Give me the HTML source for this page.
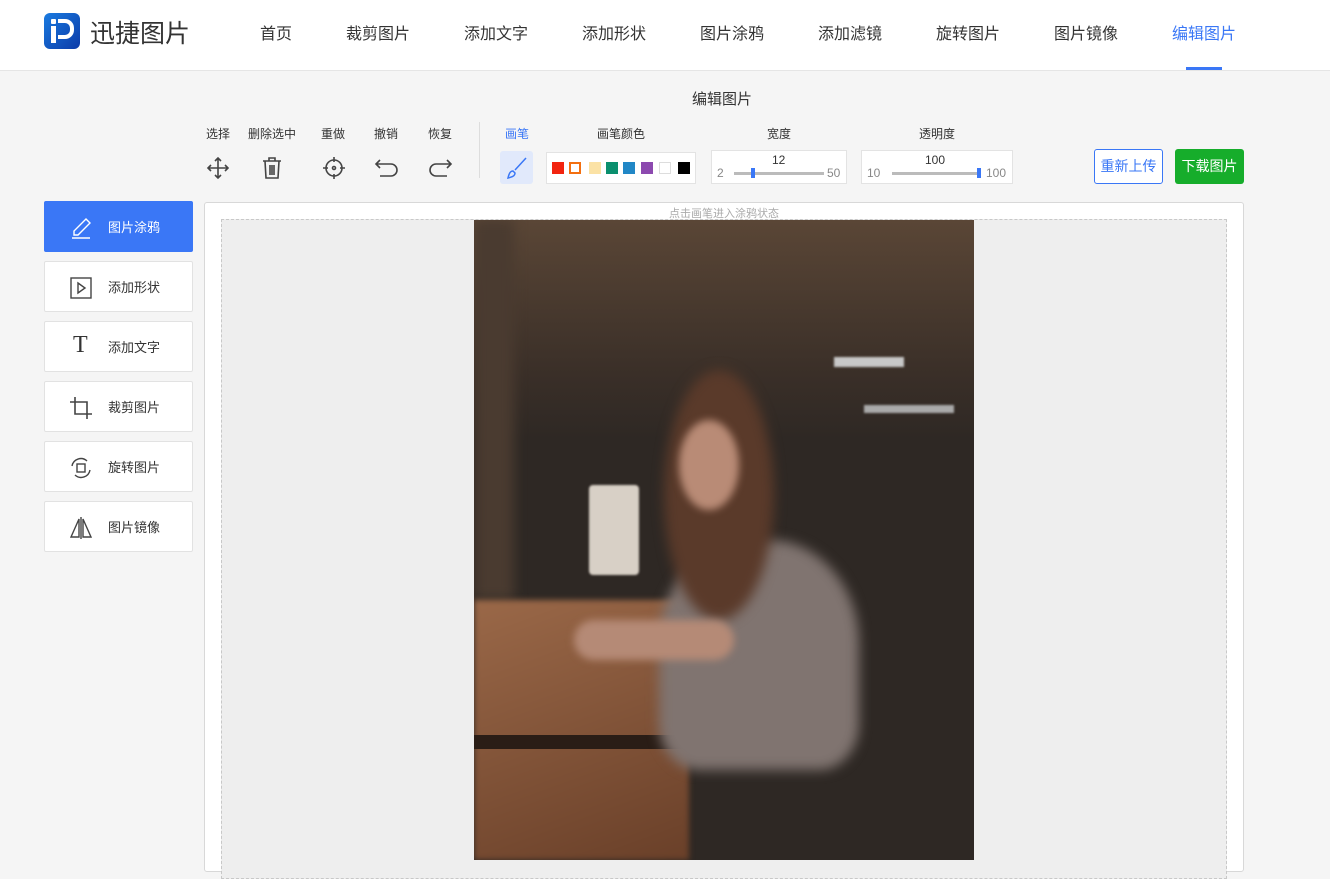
<!DOCTYPE html><html><head><meta charset="utf-8"><style>
*{box-sizing:border-box;margin:0;padding:0}
body{width:1330px;height:860px;overflow:hidden;background:#f5f5f5;font-family:"Liberation Sans","Noto Sans CJK SC",sans-serif;position:relative;color:#333}
.hdr{position:absolute;left:0;top:0;width:1330px;height:71px;background:#fff;border-bottom:1px solid #e5e5e5}
.logo{position:absolute;left:44px;top:13px;width:36px;height:36px;border-radius:6px;background:linear-gradient(135deg,#1a7be0,#0b3aa8)}
.brand{position:absolute;left:90px;top:14px;font-size:25px;color:#333}
.nav{position:absolute;top:20px;font-size:16px;color:#333}
.act{color:#3a77f6}
.ul{position:absolute;left:1186px;top:67px;width:36px;height:3px;background:#3a77f6}
.t{position:absolute;font-size:12px;color:#333;text-align:center}
.side{position:absolute;left:44px;width:149px;height:51px;background:#fff;border:1px solid #e2e2e2;border-radius:2px;font-size:13px}
.side span{position:absolute;left:63px;top:15px}
.side svg{position:absolute;left:24px;top:14px}
.sw{position:absolute;top:162px;width:12px;height:12px}
.box{position:absolute;background:#fff;border:1px solid #e3e3e3}
.ph div{position:absolute}
</style></head><body>
<div class="hdr">
<div class="logo"><div style="position:absolute;left:7px;top:6px;width:5px;height:5px;background:#fff;border-radius:1px"></div><div style="position:absolute;left:7px;top:13px;width:5px;height:17px;background:#fff"></div><div style="position:absolute;left:14px;top:6px;width:16px;height:20px;border:4px solid #fff;border-radius:0 9px 9px 0;border-left:none"></div></div>
<div class="brand">迅捷图片</div>
<div class="nav" style="left:260px">首页</div><div class="nav" style="left:346px">裁剪图片</div><div class="nav" style="left:464px">添加文字</div><div class="nav" style="left:582px">添加形状</div><div class="nav" style="left:700px">图片涂鸦</div><div class="nav" style="left:818px">添加滤镜</div><div class="nav" style="left:936px">旋转图片</div><div class="nav" style="left:1054px">图片镜像</div><div class="nav act" style="left:1172px">编辑图片</div>
<div class="ul"></div></div>
<div class="t" style="left:692px;top:88px;font-size:15px">编辑图片</div>
<div class="t" style="left:206px;top:125px">选择</div><div class="t" style="left:248px;top:125px">删除选中</div><div class="t" style="left:321px;top:125px">重做</div><div class="t" style="left:374px;top:125px">撤销</div><div class="t" style="left:428px;top:125px">恢复</div>
<div class="t" style="left:505px;top:125px;color:#3a77f6">画笔</div><div class="t" style="left:597px;top:125px">画笔颜色</div><div class="t" style="left:767px;top:125px">宽度</div><div class="t" style="left:919px;top:125px">透明度</div>
<svg style="position:absolute;left:206px;top:156px" width="24" height="24" fill="none" stroke="#444" stroke-width="1.6"><path d="M12 2v20M2 12h20M9 5l3-3 3 3M9 19l3 3 3-3M5 9l-3 3 3 3M19 9l3 3-3 3"/></svg>
<svg style="position:absolute;left:261px;top:156px" width="22" height="24" fill="none" stroke="#444" stroke-width="1.6"><path d="M2 5h18M8 5V2h6v3M4 5l1 17h12l1-17M9 9v10M11 9v10M13 9v10"/></svg>
<svg style="position:absolute;left:322px;top:156px" width="24" height="24" fill="none" stroke="#444" stroke-width="1.6"><circle cx="12" cy="12" r="8"/><circle cx="12" cy="12" r="1.5"/><path d="M12 1v5M12 18v5M1 12h5M18 12h5"/></svg>
<svg style="position:absolute;left:374px;top:156px" width="26" height="24" fill="none" stroke="#444" stroke-width="1.6"><path d="M6 4L2 8l4 4M2 8h15a6 6 0 010 12H6"/></svg>
<svg style="position:absolute;left:427px;top:156px" width="26" height="24" fill="none" stroke="#444" stroke-width="1.6"><path d="M20 4l4 4-4 4M24 8H9a6 6 0 000 12h11"/></svg>
<div style="position:absolute;left:479px;top:122px;width:1px;height:56px;background:#ddd"></div>
<div style="position:absolute;left:500px;top:151px;width:33px;height:33px;background:#e1e9fb;border-radius:3px"></div>
<svg style="position:absolute;left:505px;top:156px" width="24" height="24" fill="none" stroke="#3a77f6" stroke-width="1.5"><path d="M21 2L10 14M8 15c-3 0-4 3-5 7 4-1 7-2 7-5z"/></svg>
<div class="box" style="left:546px;top:152px;width:150px;height:32px"></div>
<div class="sw" style="left:552px;background:#f2240f"></div><div class="sw" style="left:569px;border:2px solid #f36f10"></div><div class="sw" style="left:589px;background:#fbe2a5"></div><div class="sw" style="left:606px;background:#0a8f6e"></div><div class="sw" style="left:623px;background:#2187c6"></div><div class="sw" style="left:641px;background:#8c49af"></div><div class="sw" style="left:659px;border:1px solid #ddd"></div><div class="sw" style="left:678px;background:#000"></div>
<div class="box" style="left:711px;top:150px;width:136px;height:34px"></div>
<div class="t" style="left:772px;top:153px">12</div><div class="t" style="left:717px;top:166px;color:#888">2</div><div class="t" style="left:827px;top:166px;color:#888">50</div>
<div style="position:absolute;left:734px;top:172px;width:90px;height:3px;background:#bbb"></div><div style="position:absolute;left:751px;top:168px;width:4px;height:10px;background:#3a77f6"></div>
<div class="box" style="left:861px;top:150px;width:152px;height:34px"></div>
<div class="t" style="left:925px;top:153px">100</div><div class="t" style="left:867px;top:166px;color:#888">10</div><div class="t" style="left:986px;top:166px;color:#888">100</div>
<div style="position:absolute;left:892px;top:172px;width:88px;height:3px;background:#bbb"></div><div style="position:absolute;left:977px;top:168px;width:4px;height:10px;background:#3a77f6"></div>
<div style="position:absolute;left:1094px;top:149px;width:69px;height:35px;border:1px solid #3a77f6;border-radius:3px;color:#3a77f6;font-size:14px;text-align:center;line-height:33px;background:#fff">重新上传</div>
<div style="position:absolute;left:1175px;top:149px;width:69px;height:35px;border-radius:3px;color:#fff;font-size:14px;text-align:center;line-height:35px;background:#16ad2b">下载图片</div>
<div class="side" style="top:201px;background:#3a77f6;border-color:#3a77f6;color:#fff"><svg width="24" height="24" fill="none" stroke="#fff" stroke-width="1.4"><path d="M17 3l4 4L9 19H5v-4zM3 22h18"/></svg><span>图片涂鸦</span></div>
<div class="side" style="top:261px"><svg width="24" height="24" fill="none" stroke="#444" stroke-width="1.4"><rect x="2" y="2" width="20" height="20"/><path d="M9 7l7 5-7 5z"/></svg><span>添加形状</span></div>
<div class="side" style="top:321px"><span style="left:28px;top:10px;font-family:'Liberation Serif',serif;font-size:24px">T</span><span>添加文字</span></div>
<div class="side" style="top:381px"><svg width="24" height="24" fill="none" stroke="#444" stroke-width="1.6"><path d="M6 1v17h17M1 6h17v17"/></svg><span>裁剪图片</span></div>
<div class="side" style="top:441px"><svg width="24" height="24" fill="none" stroke="#444" stroke-width="1.4"><rect x="8" y="8" width="8" height="8"/><path d="M3 10a9 9 0 0115-5M21 14a9 9 0 01-15 5"/></svg><span>旋转图片</span></div>
<div class="side" style="top:501px"><svg width="24" height="24" fill="none" stroke="#444" stroke-width="1.4"><path d="M10 3L2 21h8zM14 3l8 18h-8zM12 1v22"/></svg><span>图片镜像</span></div>
<div class="box" style="left:204px;top:202px;width:1040px;height:670px;border-color:#d8d8d8;border-radius:3px"></div>
<div class="t" style="left:669px;top:205px;color:#aaa;font-size:11px">点击画笔进入涂鸦状态</div>
<div style="position:absolute;left:221px;top:219px;width:1006px;height:660px;background:#eee;border:1px dashed #c8c8c8"></div>
<div class="ph" style="position:absolute;left:474px;top:220px;width:500px;height:640px;background:#2e2824;overflow:hidden">
<div style="left:0;top:0;width:500px;height:220px;background:linear-gradient(180deg,#5a4636,#3a2f28 70%,#2e2824)"></div>
<div style="left:0;top:0;width:40px;height:380px;background:#4a3b30;filter:blur(6px)"></div>
<div style="left:0;top:380px;width:215px;height:260px;background:linear-gradient(160deg,#9a6848,#6a4029);filter:blur(3px)"></div>
<div style="left:0;top:515px;width:215px;height:14px;background:#2a1d16"></div>
<div style="left:185px;top:320px;width:200px;height:230px;border-radius:45% 45% 20% 20%;background:#807470;filter:blur(6px)"></div>
<div style="left:215px;top:300px;width:160px;height:340px;background:#2a2420;filter:blur(8px);opacity:.0"></div>
<div style="left:190px;top:150px;width:110px;height:250px;border-radius:50%;background:#5a3a2a;filter:blur(6px)"></div>
<div style="left:205px;top:200px;width:60px;height:90px;border-radius:50%;background:#b98b76;filter:blur(4px)"></div>
<div style="left:115px;top:265px;width:50px;height:90px;background:#d8d0c6;border-radius:4px;filter:blur(1px)"></div>
<div style="left:100px;top:400px;width:160px;height:40px;background:#b58a76;border-radius:20px;filter:blur(4px)"></div>
<div style="left:360px;top:137px;width:70px;height:10px;background:#c8c8c8;filter:blur(1px)"></div>
<div style="left:390px;top:185px;width:90px;height:8px;background:#aaa;filter:blur(1px)"></div>
</div>
</body></html>
